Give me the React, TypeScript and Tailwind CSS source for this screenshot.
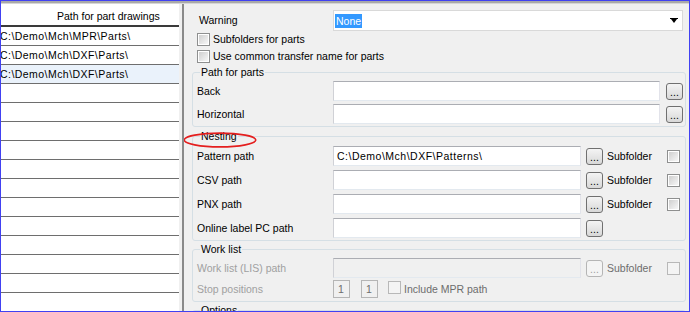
import React from 'react';

/**
 * Parts export settings: left grid of part drawing paths, right panel
 * with warning combo, path groups (parts, nesting, work list).
 */

function Checkbox({ disabled }: { disabled?: boolean }) {
  return (
    <span
      className={
        disabled
          ? 'inline-flex w-[13px] h-[13px] shrink-0 border border-[#b8b8b8] bg-[#f4f4f4]'
          : 'inline-flex w-[13px] h-[13px] shrink-0 border border-[#8e8f8f] bg-white p-[1px]'
      }
    >
      {!disabled && (
        <span className="block w-full h-full bg-linear-to-br from-[#cfcfcf] to-[#f7f7f7]" />
      )}
    </span>
  );
}

function TextBox({
  width,
  value,
  disabled,
}: {
  width: string;
  value?: string;
  disabled?: boolean;
}) {
  return (
    <div
      className={`${width} h-[20px] shrink-0 flex items-center pl-[3px] tracking-[0.5px] border border-t-[#abadb3] border-l-[#d0d1d6] border-r-[#e2e3ea] border-b-[#e3e9ef] ${
        disabled ? 'bg-[#f0f0f0]' : 'bg-white'
      }`}
    >
      {value}
    </div>
  );
}

function Browse({ disabled }: { disabled?: boolean }) {
  return (
    <span
      className={
        disabled
          ? 'w-[17px] h-[17px] shrink-0 rounded-[3px] border border-[#b5b5b5] bg-[#f4f4f4] text-[#a0a0a0] flex items-end justify-center leading-[10px] pb-[2px]'
          : 'w-[17px] h-[17px] shrink-0 rounded-[3px] border border-[#707070] bg-linear-to-b from-[#f4f4f4] to-[#d8d8d8] flex items-end justify-center leading-[10px] pb-[2px]'
      }
    >
      ...
    </span>
  );
}

function Group({
  title,
  children,
  className = '',
  marked,
}: {
  title: string;
  children?: React.ReactNode;
  className?: string;
  marked?: boolean;
}) {
  return (
    <fieldset
      className={`relative shrink-0 border border-[#d5dfe5] rounded-[3px] pl-[4px] ${className}`}
    >
      <legend className="ml-[3px] px-[1px] leading-[13px]">{title}</legend>
      {marked && (
        <svg
          className="absolute left-[-10px] top-[-11px]"
          width="75"
          height="16"
          viewBox="0 0 75 16"
        >
          <ellipse
            cx="37"
            cy="8"
            rx="35.8"
            ry="6.9"
            fill="none"
            stroke="#e41e1e"
            strokeWidth="1.6"
          />
        </svg>
      )}
      {children}
    </fieldset>
  );
}

function PathRow({
  label,
  value,
  subfolder,
  className = '',
}: {
  label: string;
  value?: string;
  subfolder?: boolean;
  className?: string;
}) {
  return (
    <div className={`flex items-center h-[20px] ${className}`}>
      <span className="w-[136px] shrink-0">{label}</span>
      <TextBox width="w-[248px]" value={value} />
      <span className="ml-[5px]">
        <Browse />
      </span>
      {subfolder && (
        <>
          <span className="ml-[4px] w-[60px]">Subfolder</span>
          <Checkbox />
        </>
      )}
    </div>
  );
}

const rows = [
  'C:\\Demo\\Mch\\MPR\\Parts\\',
  'C:\\Demo\\Mch\\DXF\\Parts\\',
  'C:\\Demo\\Mch\\DXF\\Parts\\',
  '', '', '', '', '', '', '', '', '', '', '', '', '',
];

export default function App() {
  return (
    <div className="w-[690px] h-[312px] overflow-hidden border border-[#4141f2] bg-[#f0f0f0] font-['Liberation_Sans',Arial,sans-serif] text-[10.5px] leading-[13px] text-black flex flex-col">
      <div className="h-[2px] shrink-0 bg-[#a9a9a9]" />
      <div className="h-[1px] shrink-0 bg-[#d6d6d6]" />
      <div className="flex flex-1 min-h-0">
        {/* left grid */}
        <div className="w-[178px] shrink-0 bg-white overflow-hidden">
          <div className="h-[23px] border-b-2 border-[#3a3a3a] flex items-center pt-[3px] pl-[56px]">
            Path for part drawings
          </div>
          {rows.map((r, i) => (
            <div
              key={i}
              className={`h-[19px] border-b border-[#6e6e6e] flex items-center -ml-[1px] tracking-[0.45px] ${
                i === 2 ? 'bg-[#eaf2fb]' : ''
              }`}
            >
              {r}
            </div>
          ))}
        </div>
        <div className="w-[3px] shrink-0" />
        <div className="w-[2px] shrink-0 bg-[#8a8a8a]" />
        {/* right panel */}
        <div className="flex-1 flex flex-col overflow-hidden pt-[6px] pl-[8px] pr-[3px]">
          <div className="flex items-center h-[21px] shrink-0">
            <span className="w-[141px] pl-[7px]">Warning</span>
            <div className="w-[350px] h-[21px] bg-white border border-[#d9d9d9] flex items-center pl-[1px] pr-[4px]">
              <span className="bg-[#3399ff] text-white px-[1px] leading-[14px]">None</span>
              <span className="flex-1" />
              <svg width="8" height="5" viewBox="0 0 8 5">
                <path d="M0 0H8V1H7L4 5L1 1H0Z" fill="#000" />
              </svg>
            </div>
          </div>
          <div className="flex items-center h-[17px] shrink-0 pl-[5px] gap-[3px]">
            <Checkbox />
            <span>Subfolders for parts</span>
          </div>
          <div className="flex items-center h-[17px] shrink-0 pl-[5px] gap-[3px]">
            <Checkbox />
            <span>Use common transfer name for parts</span>
          </div>

          <Group title="Path for parts" className="mt-[1px] pb-[2px]">
            <div className="flex items-center h-[20px] mt-[2px]">
              <span className="w-[136px] shrink-0">Back</span>
              <TextBox width="w-[327px]" />
              <span className="ml-[6px]">
                <Browse />
              </span>
            </div>
            <div className="flex items-center h-[20px] mt-[3px]">
              <span className="w-[136px] shrink-0">Horizontal</span>
              <TextBox width="w-[327px]" />
              <span className="ml-[6px]">
                <Browse />
              </span>
            </div>
          </Group>

          <Group title="Nesting" className="mt-[3px] pb-[2px]" marked>
            <PathRow
              label="Pattern path"
              value="C:\Demo\Mch\DXF\Patterns\"
              subfolder
              className="mt-[3px]"
            />
            <PathRow label="CSV path" subfolder className="mt-[4px]" />
            <PathRow label="PNX path" subfolder className="mt-[4px]" />
            <PathRow label="Online label PC path" className="mt-[4px]" />
          </Group>

          <Group title="Work list" className="mt-[2px] pb-[3px]">
            <div className="flex items-center h-[20px] mt-[2px]">
              <span className="w-[136px] shrink-0 text-[#a0a0a0]">Work list (LIS) path</span>
              <TextBox width="w-[248px]" disabled />
              <span className="ml-[5px]">
                <Browse disabled />
              </span>
              <span className="ml-[4px] w-[60px] text-[#6d6d6d]">Subfolder</span>
              <Checkbox disabled />
            </div>
            <div className="flex items-center h-[18px] mt-[2px]">
              <span className="w-[136px] shrink-0 text-[#a0a0a0]">Stop positions</span>
              <span className="w-[17px] h-[18px] border border-[#b5b5b5] flex items-center pl-[4px] text-[#6d6d6d]">1</span>
              <span className="ml-[11px] w-[17px] h-[18px] border border-[#b5b5b5] flex items-center pl-[4px] text-[#6d6d6d]">1</span>
              <span className="ml-[10px]">
                <Checkbox disabled />
              </span>
              <span className="ml-[3px] text-[#6d6d6d]">Include MPR path</span>
            </div>
          </Group>

          <Group title="Options" className="mt-[2px] h-[30px]" />
        </div>
      </div>
    </div>
  );
}
